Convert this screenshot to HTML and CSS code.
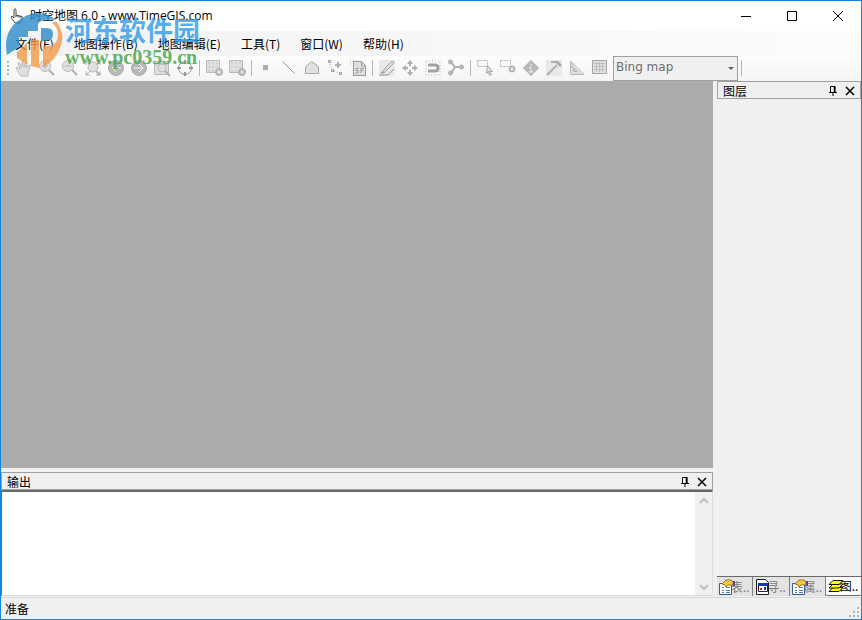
FILE: index.html
```html
<!DOCTYPE html>
<html lang="zh-CN">
<head>
  <meta charset="UTF-8">
  <title>时空地图 6.0 - www.TimeGIS.com</title>
  <link rel="stylesheet" href="styles.css">
</head>
<body>
  <div class="window">
    <header class="titlebar">
      <svg class="app-icon" width="16" height="18" viewBox="0 0 16 18" fill="#fff" stroke="#444"><path d="M5 11V2.500Q6 1 7 2.500V8L13 9.500V13L11 16H6L2 10Q3 8 5 11M7 8v2M9 8.500v2M11 9v2"/></svg>
      <h1>时空地图 6.0 - www.TimeGIS.com</h1>
      <div class="window-buttons">
        <button aria-label="最小化"><svg width="12" height="12" viewBox="0 0 12 12"><path d="M1 6.500h10"/></svg></button>
        <button aria-label="最大化"><svg width="12" height="12" viewBox="0 0 12 12"><path d="M1.500 1.500h9v9h-9z"/></svg></button>
        <button aria-label="关闭"><svg width="12" height="12" viewBox="0 0 12 12"><path d="M1 1l10 10M11 1L1 11"/></svg></button>
      </div>
    </header>

    <nav class="menubar">
      <button>文件(F)</button>
      <button>地图操作(B)</button>
      <button>地图编辑(E)</button>
      <button>工具(T)</button>
      <button>窗口(W)</button>
      <button>帮助(H)</button>
    </nav>

    <div class="toolbar">
      <span class="grip"></span>
      <button aria-label="漫游"><svg viewBox="0 0 18 18"><path class="soft" d="M5 16L1 9Q1 7 5 10L3 4Q4 2 6 6L7 8V2Q8 0 9 2V8L11 3Q13 2 12 5L11 9L14 6Q16 5 15 8L13 14V17H6z"/></svg></button>
      <button aria-label="放大"><svg viewBox="0 0 18 18"><circle class="soft" cx="7" cy="7" r="5.500"/><path d="M4 7h6M7 4v6"/><path class="thick" d="M11 11l5 5"/></svg></button>
      <button aria-label="缩小"><svg viewBox="0 0 18 18"><circle class="soft" cx="7" cy="7" r="5.500"/><path d="M4 7h6"/><path class="thick" d="M11 11l5 5"/></svg></button>
      <button aria-label="全图"><svg viewBox="0 0 18 18"><circle class="soft" cx="9" cy="8" r="5"/><path d="M2 6V2h4M12 2h4v4M2 12v4h4M12 16h4v-4M2 2l4 4M16 2l-4 4M2 16l4-4"/><path class="thick" d="M12 12l4 4"/></svg></button>
      <button aria-label="后退"><svg viewBox="0 0 18 18"><circle class="fill" cx="9" cy="9" r="7.500"/><path class="light" d="M14 9H5M9 5L5 9l4 4"/></svg></button>
      <button aria-label="前进"><svg viewBox="0 0 18 18"><circle class="fill" cx="9" cy="9" r="7.500"/><path class="light" d="M4 9h9M9 5l4 4-4 4"/></svg></button>
      <button aria-label="缩放到图层"><svg viewBox="0 0 18 18"><path class="soft" d="M1.500 2.500h14v13h-14z"/><path d="M2 5h13"/><circle class="soft" cx="9" cy="9" r="4"/><path class="thick" d="M12 12l5 5"/></svg></button>
      <button aria-label="定位"><svg viewBox="0 0 18 18"><circle class="dark" cx="9" cy="9" r="6.500"/><path class="dark thick" d="M9 1v4M9 13v4M1 9h4M13 9h4"/></svg></button>
      <span class="separator"></span>
      <button aria-label="添加图层"><svg viewBox="0 0 18 18"><path class="soft" d="M1.500 1.500h13v12h-13z"/><path class="checks" d="M3 4h11M3 8h11M3 12h11"/><circle class="fill" cx="14" cy="13" r="3.500"/><path class="light" d="M12 13h4M14 11v4"/></svg></button>
      <button aria-label="移除图层"><svg viewBox="0 0 18 18"><path class="soft" d="M1.500 1.500h13v12h-13z"/><path class="checks" d="M3 4h11M3 8h11M3 12h11"/><circle class="fill" cx="14" cy="13" r="3.500"/><path class="light" d="M12.500 11.500l3 3M15.500 11.500l-3 3"/></svg></button>
      <span class="separator"></span>
      <button aria-label="画点"><svg viewBox="0 0 18 18"><path class="solid" d="M6 6h5v5H6z"/></svg></button>
      <button aria-label="画线"><svg viewBox="0 0 18 18"><path class="dark" d="M2.500 2.500l12 12"/></svg></button>
      <button aria-label="画面"><svg viewBox="0 0 18 18"><path class="soft outlined" d="M2.500 14.500V8L8.500 2.500l7 5v7z"/></svg></button>
      <button aria-label="编辑节点"><svg viewBox="0 0 18 18"><path class="dark" d="M2.500 1.500h2v2h-2zM5.500 10.500h2v2h-2zM13.500 13.500h2v2h-2z"/><path class="dark dots" d="M4 5l2 5M8 12l5 2"/><path class="thick" d="M9 6h6M12 3v6"/></svg></button>
      <button aria-label="SF"><svg viewBox="0 0 18 18"><path class="soft" d="M4.500 2.500h8l4 4v10h-12z"/><path class="dots" d="M1 2h8M1 5h3"/><path class="dark" d="M4.500 2.500h8l4 4v10h-12zM12.500 3v4h4M9.500 9.500H7v2h2v2.500H6.500M12 14v-4.500h3M12 11.500h2"/></svg></button>
      <span class="separator"></span>
      <button aria-label="编辑"><svg viewBox="0 0 18 18"><path class="tile" d="M1 1h16v16H1z"/><path class="soft outlined" d="M3 14L14 2l2 2L6 14z"/><path class="dark" d="M3 14l3-1M1 16h9l6-6"/></svg></button>
      <button aria-label="移动"><svg viewBox="0 0 18 18"><path class="solid" d="M9 1l3 4H6zM9 17l3-4H6zM1 9l4-3v6zM17 9l-4-3v6z"/><path class="thick" d="M9 4v3M9 11v3M4 9h3M11 9h3"/></svg></button>
      <button aria-label="捕捉"><svg viewBox="0 0 18 18"><path class="dots" d="M2 2h14v14H2z"/><path class="magnet" d="M4 6h7q3 0 3 3t-3 3H4"/></svg></button>
      <button aria-label="拓扑"><svg viewBox="0 0 18 18"><path class="thick" d="M4 3l4 5-4 6M8 8h6"/><circle class="fill" cx="3.500" cy="3" r="2"/><circle class="fill" cx="3.500" cy="14" r="2"/><circle class="fill" cx="14.500" cy="8" r="2"/></svg></button>
      <span class="separator"></span>
      <button aria-label="选择"><svg viewBox="0 0 18 18"><path class="dashes" d="M1.500 1.500h10v6h-10z"/><path class="soft outlined" d="M11.500 6.500l5 6h-3l2 3-2 1-1-4-2 2z"/></svg></button>
      <button aria-label="清除选择"><svg viewBox="0 0 18 18"><path class="dashes" d="M1.500 1.500h10v6h-10z"/><circle class="fill" cx="13" cy="10" r="3"/><path class="light" d="M11.500 8.500l3 3M14.500 8.500l-3 3"/></svg></button>
      <button aria-label="属性查询"><svg viewBox="0 0 18 18"><path class="fill" d="M9 1.500L16.500 9 9 16.500 1.500 9z"/><path class="light" d="M9 5v2M7 8.500h2V13M7 13h4"/></svg></button>
      <button aria-label="工具"><svg viewBox="0 0 18 18"><path class="tile" d="M1 1h16v16H1z"/><path class="thick" d="M2 16L12 6"/><path class="solid" d="M6 2h7l4 4-2 2-4-4H6z"/></svg></button>
      <button aria-label="测量"><svg viewBox="0 0 18 18"><path class="soft" d="M2.500 2v13.500H16z"/><path d="M5.500 9v3.500H9zM3 5h2M3 8h2"/></svg></button>
      <button aria-label="属性表"><svg viewBox="0 0 18 18"><path class="soft outlined" d="M1.500 1.500h14v13h-14z"/><path class="grid-lines" d="M3 4.500h11M3 7.500h11M3 10.500h11M5.500 3v10M8.500 3v10M11.500 3v10"/></svg></button>
      <label class="combo">
        <select aria-label="底图" disabled><option>Bing map</option></select>
      </label>
      <span class="separator"></span>
    </div>

    <main class="workspace">
      <div class="documents">
        <section class="map-area"></section>
        <section class="output">
          <div class="panel-title">
            <h2>输出</h2>
            <button aria-label="固定"><svg width="12" height="12" viewBox="0 0 12 12"><path d="M3.500 7V1.500H8V7M2 7.500h8M6 8v3"/><path class="bar" d="M7.500 1v6"/></svg></button>
            <button aria-label="关闭"><svg width="12" height="12" viewBox="0 0 12 12"><path class="cross" d="M2 2l8 8M10 2l-8 8"/></svg></button>
          </div>
          <div class="output-body">
            <textarea aria-label="输出" readonly></textarea>
            <div class="scrollbar">
              <button aria-label="向上"><svg width="10" height="8" viewBox="0 0 10 8"><path d="M1 6l4-4 4 4"/></svg></button>
              <button aria-label="向下"><svg width="10" height="8" viewBox="0 0 10 8"><path d="M1 2l4 4 4-4"/></svg></button>
            </div>
          </div>
        </section>
      </div>

      <aside class="layers">
        <div class="panel-title">
          <h2>图层</h2>
          <button aria-label="固定"><svg width="12" height="12" viewBox="0 0 12 12"><path d="M3.500 7V1.500H8V7M2 7.500h8M6 8v3"/><path class="bar" d="M7.500 1v6"/></svg></button>
          <button aria-label="关闭"><svg width="12" height="12" viewBox="0 0 12 12"><path class="cross" d="M2 2l8 8M10 2l-8 8"/></svg></button>
        </div>
        <div class="layer-list"></div>
        <div class="tabs">
          <button>
            <svg width="16" height="16" viewBox="0 0 16 16"><path fill="#fff" stroke="#3c5c9c" d="M.5 4.500h12v11H.5z"/><path stroke="#5078c8" d="M3 8.500h2M7 8.500h4M3 11.500h2M7 11.500h4M3 13.500h2M7 13.500h4"/><path fill="#f8c840" stroke="#987018" d="M3 5l4-4h5l2 2v3H9L7 8 6 6z"/><path fill="#6040a0" d="M14 2h2v5h-2z"/></svg>
            <span>表..</span>
          </button>
          <button>
            <svg width="16" height="16" viewBox="0 0 16 16"><path fill="#fff" stroke="#222" d="M1.500.5h9l3 3v12h-12z"/><path fill="#fff" stroke="#222" d="M3.500 5.500h9v7h-9z"/><path fill="#1838a8" d="M3 4h10v3H3z"/><path fill="#d02020" d="M5 9h2v2H5z"/><path fill="#1838c8" d="M9 8h2v3H9z"/></svg>
            <span>寻..</span>
          </button>
          <button>
            <svg width="16" height="16" viewBox="0 0 16 16"><path fill="#fff" stroke="#3c5c9c" d="M.5 4.500h12v11H.5z"/><path stroke="#5078c8" d="M3 8.500h2M7 8.500h4M3 11.500h2M7 11.500h4M3 13.500h2M7 13.500h4"/><path fill="#f8c840" stroke="#987018" d="M3 5l4-4h5l2 2v3H9L7 8 6 6z"/><path fill="#6040a0" d="M14 2h2v5h-2z"/></svg>
            <span>属..</span>
          </button>
          <button class="active">
            <svg width="16" height="16" viewBox="0 0 16 16"><g fill="#ff0" stroke="#111"><path d="M1 13.500l4-4h10l-4 4z"/><path d="M1 10l4-4h10l-4 4z"/><path d="M1 6.500l4-4h10l-4 4z"/></g></svg>
            <span>图..</span>
          </button>
        </div>
      </aside>
    </main>

    <footer class="statusbar">
      <span>准备</span>
      <svg width="12" height="12" viewBox="0 0 12 12" fill="#b4b4b4"><path d="M8 0h2v2H8zM4 4h2v2H4zM8 4h2v2H8zM0 8h2v2H0zM4 8h2v2H4zM8 8h2v2H8z"/></svg>
    </footer>
  </div>

  <div class="watermark">
    <svg width="60" height="60" viewBox="0 0 60 60">
      <path fill="#2c8bcb" d="M2 44Q-3 19 17 7Q35-4 51 9Q36 7 33 13V20H23V26H14V36z"/>
      <path fill="#2c8bcb" d="M36 17h6q6 0 6 6t-6 7h-6z"/>
      <path fill="#f29a4a" d="M51 10Q62 24 54 39Q49 51 38 56V35H43Q53 34 53 24Q53 16 47 12z"/>
      <path fill="#f29a4a" d="M12 41L22 32V53L12 47zM26 29H34V57L26 55z"/>
    </svg>
    <div class="watermark-text">
      <strong>河东软件园</strong>
      <span>www.pc0359.cn</span>
    </div>
  </div>
</body>
</html>
```

FILE: styles.css
```css
* {
  box-sizing: border-box;
}

body {
  margin: 0;
  font-family: "Noto Sans", "Noto Sans CJK SC", sans-serif;
  font-size: 12px;
  line-height: 16px;
  color: #000;
}

button {
  display: flex;
  align-items: center;
  justify-content: center;
  padding: 0;
  border: 0;
  background: none;
  font: inherit;
  color: inherit;
}

h1, h2 {
  margin: 0;
  font-size: 12px;
  font-weight: normal;
}

svg {
  flex: none;
}

.window {
  display: flex;
  flex-direction: column;
  height: 100vh;
  border: 1px solid #1883d7;
  background: #f0f0f0;
}

/* title bar */
.titlebar {
  display: flex;
  align-items: center;
  height: 30px;
  padding-left: 8px;
  background: #fff;
}

.titlebar h1 {
  font-family: "Open Sans", "Noto Sans CJK SC", sans-serif;
}

.app-icon {
  margin-right: 5px;
}

.window-buttons {
  display: flex;
  margin-left: auto;
}

.window-buttons button {
  width: 46px;
  height: 30px;
}

.window-buttons svg,
.panel-title svg {
  fill: none;
  stroke: #000;
}

/* menu */
.menubar {
  display: flex;
  align-items: center;
  gap: 20px;
  height: 25px;
  padding-left: 14px;
  background: linear-gradient(90deg, #f2f2f2, #fcfcfc);
  font-family: "Noto Sans CJK SC", sans-serif;
}

/* toolbar */
.toolbar {
  display: flex;
  align-items: center;
  height: 25px;
  padding-bottom: 1px;
  background: linear-gradient(#fdfdfd, #f4f4f4);
}

.toolbar button {
  width: 23px;
  height: 23px;
}

.toolbar svg {
  width: 18px;
  height: 18px;
  fill: none;
  stroke: #b0b0b0;
}

.toolbar .soft {
  fill: #e0e0e0;
  stroke: #bababa;
}

.toolbar .outlined {
  stroke: #a4a4a4;
}

.toolbar .fill {
  fill: #b8b8b8;
  stroke: #acacac;
}

.toolbar .solid {
  fill: #acacac;
  stroke: none;
}

.toolbar .tile {
  fill: #e8e8e8;
  stroke: none;
}

.toolbar .light {
  stroke: #f4f4f4;
}

.toolbar .dark {
  stroke: #989898;
}

.toolbar .thick {
  stroke-width: 2;
}

.toolbar .magnet {
  stroke: #a0a0a0;
  stroke-width: 3;
}

.toolbar .dots {
  stroke-dasharray: 1 2;
}

.toolbar .dashes {
  stroke-dasharray: 2 1;
}

.toolbar .grid-lines {
  stroke: #c0c0c0;
}

.toolbar .checks {
  stroke: #d0d0d0;
  stroke-width: 2;
  stroke-dasharray: 2 2;
}

.grip {
  width: 3px;
  height: 15px;
  margin: 0 2px 0 6px;
  background: repeating-linear-gradient(#b0b0b0 0 2px, transparent 2px 4px);
  background-size: 2px 100%;
  background-repeat: no-repeat;
}

.separator {
  width: 4px;
  height: 16px;
  margin-right: 2px;
  border-right: 1px solid #b8b8b8;
}

.combo {
  position: relative;
  height: 25px;
  margin-left: 2px;
}

.combo select {
  width: 125px;
  height: 25px;
  padding: 0 2px 2px;
  appearance: none;
  border: 1px solid #a0a0a0;
  border-radius: 0;
  background: #f0f0f0;
  font-family: "DejaVu Sans", sans-serif;
  font-size: 12px;
  color: #6d6d6d;
  opacity: 1;
}

.combo::after {
  content: "";
  position: absolute;
  top: 11px;
  right: 4px;
  border: 3px solid transparent;
  border-top-color: #606060;
  border-bottom: 0;
}

/* docked panels */
.workspace {
  display: flex;
  flex: 1;
  gap: 4px;
  min-height: 0;
}

.documents {
  display: flex;
  flex: 1;
  flex-direction: column;
  gap: 4px;
  margin-bottom: 1px;
}

.map-area {
  flex: 1;
  background: #ababab;
}

.output {
  display: flex;
  flex-direction: column;
  height: 124px;
}

.panel-title {
  display: flex;
  align-items: center;
  height: 18px;
  padding: 2px 4px 0 5px;
  border: 1px solid #a0a0a0;
  font-family: "Noto Sans CJK SC", sans-serif;
}

.panel-title h2 {
  flex: 1;
}

.panel-title button {
  width: 12px;
  height: 16px;
  margin-left: 5px;
}

.panel-title .cross,
.panel-title .bar {
  stroke-width: 1.5;
}

.output-body {
  display: flex;
  flex: 1;
  border: 1px solid #dcdcdc;
  border-top: 2px solid #696969;
  border-left-color: #696969;
}

.output-body textarea {
  flex: 1;
  padding: 2px;
  border: 0;
  outline: 0;
  resize: none;
  background: #fff;
}

.scrollbar {
  display: flex;
  flex-direction: column;
  justify-content: space-between;
  width: 17px;
  background: #f0f0f0;
}

.scrollbar button {
  height: 17px;
}

.scrollbar svg {
  fill: none;
  stroke: #c0c0c0;
  stroke-width: 2;
}

.layers {
  display: flex;
  flex-direction: column;
  width: 144px;
}

.layer-list {
  flex: 1;
}

.tabs {
  display: flex;
  height: 20px;
  margin-bottom: 1px;
  border-top: 1px solid #696969;
  background: #e3e3e3;
  font-family: "Noto Sans CJK SC", sans-serif;
}

.tabs button {
  flex: 1;
  justify-content: flex-start;
  padding-left: 2px;
  border-right: 1px solid #808080;
  overflow: hidden;
  color: #808080;
}

.tabs svg {
  position: relative;
  fill: none;
}

.tabs span {
  margin-left: -4px;
}

.tabs .active {
  border-right: 0;
  border-bottom: 1px solid #696969;
  border-radius: 0 0 2px 2px;
  background: #fff;
  color: #000;
}

/* status bar */
.statusbar {
  display: flex;
  align-items: center;
  justify-content: space-between;
  height: 22px;
  padding-left: 4px;
  border-top: 1px solid #d7d7d7;
  font-family: "Noto Sans CJK SC", sans-serif;
}

.statusbar svg {
  align-self: flex-end;
}

/* site logo over the top left corner */
.watermark {
  position: absolute;
  top: 11px;
  left: 5px;
  display: flex;
  opacity: 0.8;
  pointer-events: none;
}

.watermark-text {
  display: flex;
  flex-direction: column;
  margin-top: 3px;
}

.watermark strong {
  font-family: "Noto Sans CJK SC", sans-serif;
  font-size: 27px;
  line-height: 32px;
  color: #2f9be8;
}

.watermark span {
  font-family: "Liberation Serif", serif;
  font-size: 20px;
  font-weight: bold;
  line-height: 22px;
  color: #3fa53f;
}
```
